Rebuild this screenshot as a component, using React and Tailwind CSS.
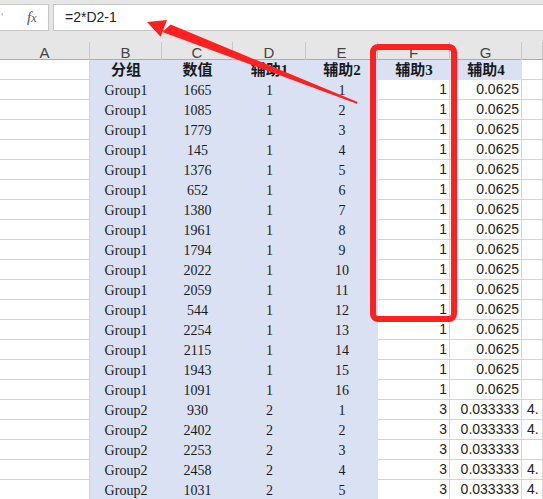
import React from 'react'

// column widths: A..G, H takes the rest
const COLS = 'grid-cols-[90px_72px_71px_73px_72px_72px_72px_1fr]'
const LETTERS = ['A', 'B', 'C', 'D', 'E', 'F', 'G', '']

const G1 = [1665, 1085, 1779, 145, 1376, 652, 1380, 1961, 1794, 2022, 2059, 544, 2254, 2115, 1943, 1091]
const G2 = [930, 2402, 2253, 2458, 1031]

const ROWS = [
  ...G1.map((v, i) => ({ b: 'Group1', c: v, d: 1, e: i + 1, f: 1, g: '0.0625', h: '' })),
  ...G2.map((v, i) => ({ b: 'Group2', c: v, d: 2, e: i + 1, f: 3, g: '0.033333', h: i === 2 ? '' : '4.' })),
]

const serif = { fontFamily: '"Liberation Serif", "Noto Sans CJK SC", serif' }
const sans = { fontFamily: '"Liberation Sans", "Noto Sans CJK SC", sans-serif' }

function BlueCell({ children, bold }) {
  return (
    <div
      className={`h-5 bg-[#d9e1f2] flex items-center justify-center text-[#1a1a1a] ${bold ? 'text-[15px] font-bold' : 'text-[14px]'}`}
      style={serif}
    >
      {children}
    </div>
  )
}

function WhiteCell({ children, align = 'right' }) {
  return (
    <div
      className={`h-5 bg-white border-r border-b border-[#d4d4d4] flex items-center text-[14px] text-[#222] whitespace-nowrap ${align === 'right' ? 'justify-end pr-[2px]' : 'justify-start pl-[5px]'}`}
      style={sans}
    >
      {children}
    </div>
  )
}

export default function App() {
  return (
    <div className="relative w-[543px] h-[499px] overflow-hidden bg-[#e6e6e6]">
      {/* formula bar */}
      <div className="flex pt-[4px] h-[32px] gap-[4px]">
        <div className="w-[49px] h-[27px] bg-white border border-l-0 border-[#c6c6c6] flex items-center relative">
          <span className="absolute left-[1px] top-[5px] text-[10px] text-[#999]">'</span>
          <span className="ml-[27px] italic text-[15px] text-[#555]" style={serif}>f<span className="text-[12px]">x</span></span>
        </div>
        <div className="flex-1 h-[27px] bg-white border border-r-0 border-[#c6c6c6] flex items-center pl-[11px] text-[14px] text-[#222]" style={sans}>
          =2*D2-1
        </div>
      </div>

      {/* column letters */}
      <div className={`grid ${COLS} mt-[10px] h-[18px] border-b border-[#ababab]`}>
        {LETTERS.map((l, i) => (
          <div key={i} className="border-r border-[#c8c8c8] flex items-center justify-center text-[15px] text-[#444]" style={sans}>
            {l}
          </div>
        ))}
      </div>

      {/* sheet */}
      <div className={`grid ${COLS} bg-white`}>
        <WhiteCell />
        <BlueCell bold>分组</BlueCell>
        <BlueCell bold>数值</BlueCell>
        <BlueCell bold>辅助1</BlueCell>
        <BlueCell bold>辅助2</BlueCell>
        <BlueCell bold>辅助3</BlueCell>
        <BlueCell bold>辅助4</BlueCell>
        <WhiteCell />
        {ROWS.map((r, i) => (
          <React.Fragment key={i}>
            <WhiteCell />
            <BlueCell>{r.b}</BlueCell>
            <BlueCell>{r.c}</BlueCell>
            <BlueCell>{r.d}</BlueCell>
            <BlueCell>{r.e}</BlueCell>
            <WhiteCell>{r.f}</WhiteCell>
            <WhiteCell>{r.g}</WhiteCell>
            <WhiteCell align="left">{r.h}</WhiteCell>
          </React.Fragment>
        ))}
      </div>

      {/* annotations */}
      <svg className="absolute inset-0 pointer-events-none" width="543" height="499" viewBox="0 0 543 499">
        <rect x="373" y="47" width="81" height="272" rx="5" fill="none" stroke="#ff2020" strokeWidth="6" />
        <polygon points="162.4,32.1 170.6,24.6 357.6,101.9 356.9,103.8" fill="#ff2020" />
        <polygon points="147,22 167,20 160.6,36.8" fill="#ff2020" />
      </svg>
    </div>
  )
}
